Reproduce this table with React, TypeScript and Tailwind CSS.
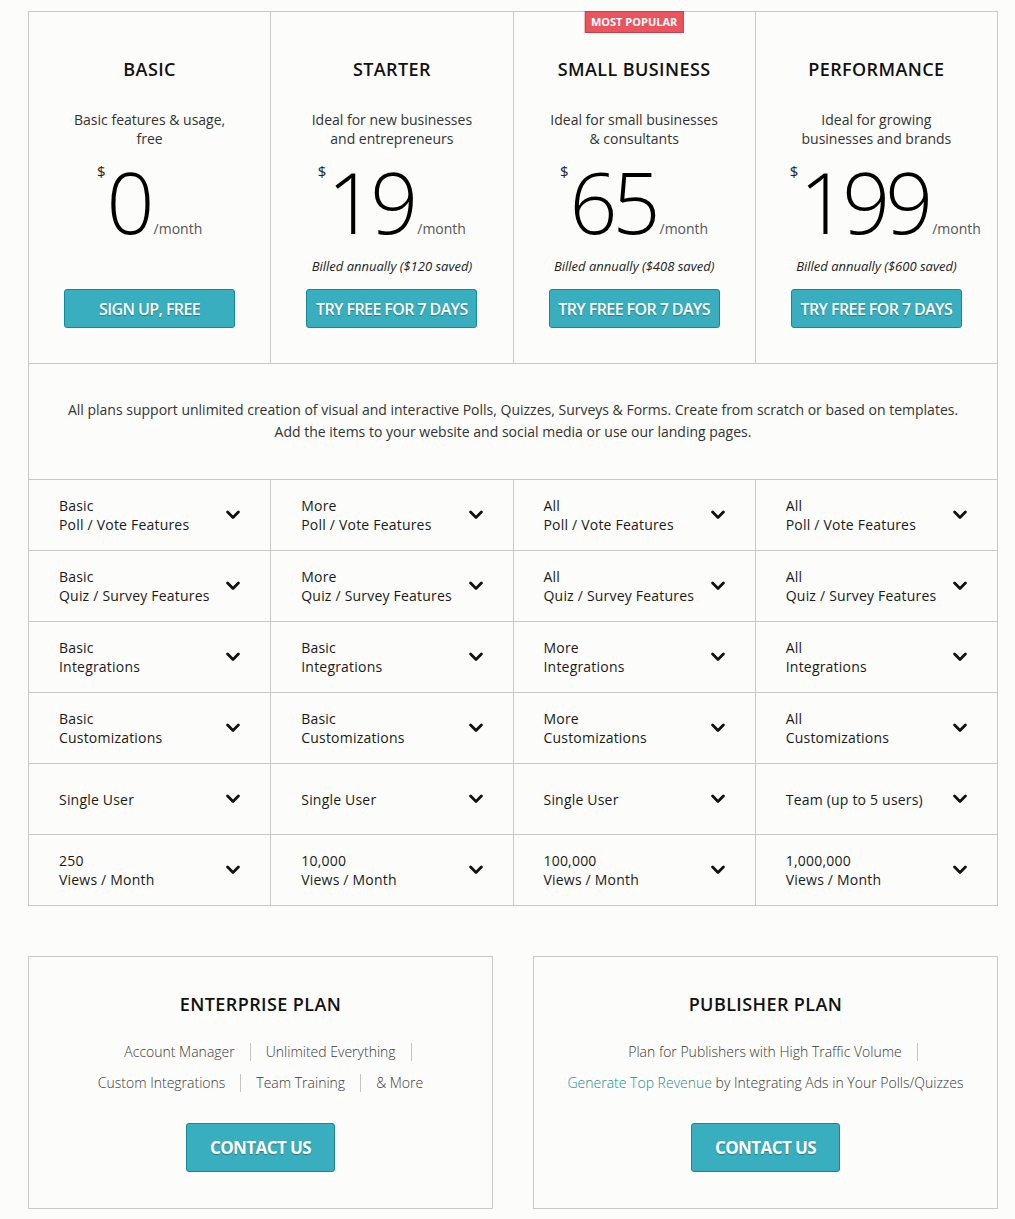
import React from "react";

type Plan = {
  name: string;
  desc: string[];
  price: string;
  billed?: string;
  cta: string;
  popular?: boolean;
  wide?: boolean;
  features: string[][];
};

const plans: Plan[] = [
  {
    name: "BASIC",
    desc: ["Basic features & usage,", "free"],
    price: "0",
    cta: "SIGN UP, FREE",
    features: [
      ["Basic", "Poll / Vote Features"],
      ["Basic", "Quiz / Survey Features"],
      ["Basic", "Integrations"],
      ["Basic", "Customizations"],
      ["Single User"],
      ["250", "Views / Month"],
    ],
  },
  {
    name: "STARTER",
    desc: ["Ideal for new businesses", "and entrepreneurs"],
    price: "19",
    billed: "Billed annually ($120 saved)",
    cta: "TRY FREE FOR 7 DAYS",
    features: [
      ["More", "Poll / Vote Features"],
      ["More", "Quiz / Survey Features"],
      ["Basic", "Integrations"],
      ["Basic", "Customizations"],
      ["Single User"],
      ["10,000", "Views / Month"],
    ],
  },
  {
    name: "SMALL BUSINESS",
    desc: ["Ideal for small businesses", "& consultants"],
    price: "65",
    billed: "Billed annually ($408 saved)",
    cta: "TRY FREE FOR 7 DAYS",
    popular: true,
    features: [
      ["All", "Poll / Vote Features"],
      ["All", "Quiz / Survey Features"],
      ["More", "Integrations"],
      ["More", "Customizations"],
      ["Single User"],
      ["100,000", "Views / Month"],
    ],
  },
  {
    name: "PERFORMANCE",
    desc: ["Ideal for growing", "businesses and brands"],
    price: "199",
    billed: "Billed annually ($600 saved)",
    cta: "TRY FREE FOR 7 DAYS",
    wide: true,
    features: [
      ["All", "Poll / Vote Features"],
      ["All", "Quiz / Survey Features"],
      ["All", "Integrations"],
      ["All", "Customizations"],
      ["Team (up to 5 users)"],
      ["1,000,000", "Views / Month"],
    ],
  },
];

const Chevron = () => (
  <svg width="14" height="10" viewBox="0 0 14 10" className="shrink-0">
    <polyline
      points="1.6,2 7,7.4 12.4,2"
      fill="none"
      stroke="#111"
      strokeWidth="2.8"
      strokeLinecap="round"
      strokeLinejoin="round"
    />
  </svg>
);

const PlanHeader = ({ plan }: { plan: Plan }) => (
  <div className="relative flex flex-col items-center border-r border-b border-[#c9c9c9] pt-[45px] pb-[35px]">
    {plan.popular && (
      <div className="absolute top-[-1px] left-1/2 -translate-x-1/2 border border-[#c9404b] bg-[#e9545e] px-[5px] h-[22px] leading-[20px] text-[11px] font-bold text-white">
        MOST POPULAR
      </div>
    )}
    <h3 className="text-[18px] leading-[24px] font-semibold tracking-[0.4px] text-[#111]">
      {plan.name}
    </h3>
    <div className="mt-[29px] h-[38px] text-center text-[14px] leading-[19px] text-[#333]">
      {plan.desc.map((d) => (
        <div key={d}>{d}</div>
      ))}
    </div>
    <div className={plan.wide ? "mt-[12px] flex items-start pl-[18px]" : "mt-[12px] flex items-start"}>
      <span className="mt-[1px] mr-[1px] text-[15px] leading-[20px] text-[#222]">$</span>
      <div className="flex items-baseline">
        <span className="text-[84px] leading-[84px] font-light tracking-[-5px] text-black">
          {plan.price}
        </span>
        <span className="ml-[4px] text-[14px] text-[#555]">/month</span>
      </div>
    </div>
    <div className="mt-[13px] h-[18px] text-[13px] leading-[18px] italic text-[#222]">
      {plan.billed}
    </div>
    <button className="mt-[14px] h-[39px] w-[171px] rounded-[3px] border border-[#138a9a] bg-[#39aebe] text-[16px] font-semibold tracking-[-0.6px] text-white [text-shadow:0_1px_1px_rgba(0,0,0,0.3)]">
      {plan.cta}
    </button>
  </div>
);

const FeatureCell = ({ lines }: { lines: string[] }) => (
  <div className="flex h-[71px] items-center justify-between border-r border-b border-[#c9c9c9] pl-[30px] pr-[30px]">
    <div className="text-[14px] leading-[19px] tracking-[0.2px] text-[#1a1a1a]">
      {lines.map((l) => (
        <div key={l}>{l}</div>
      ))}
    </div>
    <Chevron />
  </div>
);

const Item = ({ children, last }: { children: React.ReactNode; last?: boolean }) => (
  <span
    className={
      last
        ? "px-[15px] text-[14px] leading-[18px] font-light text-[#3a3a3a]"
        : "border-r border-[#c4c4c4] px-[15px] text-[14px] leading-[18px] font-light text-[#3a3a3a]"
    }
  >
    {children}
  </span>
);

const ContactButton = () => (
  <button className="h-[49px] w-[149px] rounded-[3px] border border-[#138a9a] bg-[#39aebe] text-[17px] font-bold tracking-[-0.6px] text-white [text-shadow:0_1px_1px_rgba(0,0,0,0.3)]">
    CONTACT US
  </button>
);

export default function App() {
  return (
    <div
      className="min-h-[1219px] bg-[#fcfcfb] pt-[11px] pb-[11px] pl-[28px]"
      style={{ fontFamily: '"Open Sans", "DejaVu Sans", sans-serif' }}
    >
      <div className="grid w-[970px] grid-cols-4 border-t border-l border-[#c9c9c9]">
        {plans.map((p) => (
          <PlanHeader key={p.name} plan={p} />
        ))}
        <div className="col-span-4 border-r border-b border-[#c9c9c9] pt-[35px] pb-[36px] text-center text-[14px] leading-[22px] text-[#333]">
          <div>
            All plans support unlimited creation of visual and interactive Polls, Quizzes, Surveys &amp; Forms. Create from scratch or based on templates.
          </div>
          <div>Add the items to your website and social media or use our landing pages.</div>
        </div>
        {plans[0].features.map((_, row) =>
          plans.map((p) => <FeatureCell key={p.name + row} lines={p.features[row]} />)
        )}
      </div>

      <div className="mt-[50px] flex w-[970px] gap-[40px]">
        <div className="flex h-[253px] w-[465px] flex-col items-center border border-[#c9c9c9] pt-[35px]">
          <h3 className="text-[18px] leading-[24px] font-semibold tracking-[0.4px] text-[#111]">
            ENTERPRISE PLAN
          </h3>
          <div className="mt-[20px] flex h-[31px] items-center justify-center">
            <Item>Account Manager</Item>
            <Item>Unlimited Everything</Item>
          </div>
          <div className="flex h-[31px] items-center justify-center">
            <Item>Custom Integrations</Item>
            <Item>Team Training</Item>
            <Item last>&amp; More</Item>
          </div>
          <div className="mt-[25px]">
            <ContactButton />
          </div>
        </div>
        <div className="flex h-[253px] w-[465px] flex-col items-center border border-[#c9c9c9] pt-[35px]">
          <h3 className="text-[18px] leading-[24px] font-semibold tracking-[0.4px] text-[#111]">
            PUBLISHER PLAN
          </h3>
          <div className="mt-[20px] flex h-[31px] items-center justify-center">
            <Item>Plan for Publishers with High Traffic Volume</Item>
          </div>
          <div className="flex h-[31px] items-center justify-center">
            <Item last>
              <span className="text-[#1a8c92]">Generate Top Revenue</span> by Integrating Ads in Your Polls/Quizzes
            </Item>
          </div>
          <div className="mt-[25px]">
            <ContactButton />
          </div>
        </div>
      </div>
    </div>
  );
}
